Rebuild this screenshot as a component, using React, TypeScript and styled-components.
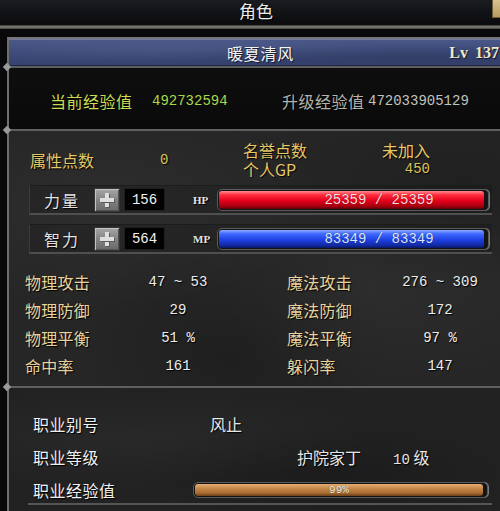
import { Fragment } from 'react'
import { createGlobalStyle, styled } from 'styled-components'

const GlobalStyle = createGlobalStyle`
  html, body {
    margin: 0;
    padding: 0;
    background: #09090b;
    overflow: hidden;
  }
  body {
    font-family: 'Noto Sans CJK SC', 'Noto Sans', sans-serif;
  }
  #root {
    width: 500px;
    height: 511px;
    overflow: hidden;
  }
`

const mono = `'Liberation Mono', 'DejaVu Sans Mono', monospace`

type BarKind = 'hp' | 'mp' | 'job'

const stats = [
	['物理攻击', '47 ~ 53', '魔法攻击', '276 ~ 309'],
	['物理防御', '29', '魔法防御', '172'],
	['物理平衡', '51 %', '魔法平衡', '97 %'],
	['命中率', '161', '躲闪率', '147'],
]

export default function App() {
	return (
		<>
			<GlobalStyle />
			<Window>
				<TitleBar>
					<Title>角色</Title>
					<CloseTab />
				</TitleBar>
				<Rail />
				<Frame>
					<NameBar>
						<Name>暖夏清风</Name>
						<Level>Lv 137</Level>
					</NameBar>

					<ExpSection>
						<ExpLabel $tone='current'>当前经验值</ExpLabel>
						<ExpValue $tone='current'>492732594</ExpValue>
						<ExpLabel $tone='next'>升级经验值</ExpLabel>
						<ExpValue $tone='next'>472033905129</ExpValue>
					</ExpSection>

					<AttrSection>
						<PointsRow>
							<GoldLabel>属性点数</GoldLabel>
							<GoldValue>0</GoldValue>
							<HonorBlock>
								<GoldLabel>名誉点数</GoldLabel>
								<GoldLabel>未加入</GoldLabel>
								<GoldLabel>个人GP</GoldLabel>
								<GoldValue>450</GoldValue>
							</HonorBlock>
						</PointsRow>

						<Strip $top={6}>
							<StripLabel>力量</StripLabel>
							<PlusButton />
							<ValueBox>156</ValueBox>
							<Tag>HP</Tag>
							<BarFrame>
								<Bar $kind='hp'>25359 / 25359</Bar>
							</BarFrame>
						</Strip>
						<Strip $top={9}>
							<StripLabel>智力</StripLabel>
							<PlusButton />
							<ValueBox>564</ValueBox>
							<Tag>MP</Tag>
							<BarFrame>
								<Bar $kind='mp'>83349 / 83349</Bar>
							</BarFrame>
						</Strip>

						<StatGrid>
							{stats.map((row) => (
								<Fragment key={row[0]}>
									<StatLabel>{row[0]}</StatLabel>
									<StatValue>{row[1]}</StatValue>
									<span />
									<StatLabel>{row[2]}</StatLabel>
									<StatValue>{row[3]}</StatValue>
								</Fragment>
							))}
						</StatGrid>
					</AttrSection>

					<JobSection>
						<JobGrid>
							<JobLabel>职业别号</JobLabel>
							<JobText>风止</JobText>
							<span />
							<span />
							<JobLabel>职业等级</JobLabel>
							<span />
							<JobText>护院家丁</JobText>
							<JobText>
								<Num>10</Num> 级
							</JobText>
						</JobGrid>
						<JobStrip>
							<JobLabel>职业经验值</JobLabel>
							<BarFrame $slim>
								<Bar $kind='job'>99%</Bar>
							</BarFrame>
						</JobStrip>
					</JobSection>
				</Frame>
			</Window>
		</>
	)
}

const Window = styled.div`
	width: 500px;
	height: 511px;
	display: flex;
	flex-direction: column;
	background: #09090b;
`

const TitleBar = styled.div`
	height: 25px;
	display: grid;
	grid-template-columns: 1fr auto 1fr;
	align-items: start;
	padding-left: 12px;
	background: linear-gradient(180deg, #1b1c21 0%, #101114 60%, #0b0b0d 100%);
`
const Title = styled.div`
	grid-column: 2;
	padding-top: 2px;
	font-size: 17px;
	line-height: 18px;
	color: #ececec;
	text-shadow: 1px 1px 1px #000;
`
const CloseTab = styled.div`
	grid-column: 3;
	justify-self: end;
	width: 7px;
	height: 17px;
	background: linear-gradient(180deg, #d8c28c, #b89c60);
	border-left: 1px solid #6e5c38;
	border-bottom: 1px solid #6e5c38;
`
const Rail = styled.div`
	height: 4px;
	margin-bottom: 8px;
	background: linear-gradient(180deg, #333 0%, #858578 50%, #3a3a3a 100%);
`

const Frame = styled.div`
	margin-left: 7px;
	width: 503px;
	flex: 1;
	display: flex;
	flex-direction: column;
	border-left: 2px solid #6e6e6e;
	border-top: 2px solid #767676;
`

const NameBar = styled.div`
	height: 27px;
	display: grid;
	grid-template-columns: 1fr auto 1fr;
	align-items: center;
	background:
		radial-gradient(ellipse at 30% 40%, rgba(255, 255, 255, 0.05), transparent 50%),
		radial-gradient(ellipse at 80% 70%, rgba(0, 0, 0, 0.12), transparent 50%),
		linear-gradient(180deg, #4b598a 0%, #3d4a7a 45%, #36436f 100%);
	box-shadow: inset 0 1px 0 #6f7aa0, inset 0 -1px 0 #1f2540;
`
const Name = styled.div`
	grid-column: 2;
	font-size: 16px;
	letter-spacing: 0.75px;
	line-height: 1;
	color: #f4f4f4;
	text-shadow: 1px 1px 1px #101426;
`
const Level = styled.div`
	grid-column: 3;
	justify-self: end;
	padding-right: 13px;
	font-family: 'Liberation Serif', serif;
	font-weight: bold;
	font-size: 16px;
	word-spacing: 3px;
	color: #f1e8c6;
	text-shadow: 1px 1px 1px #12162a;
`

const Section = styled.div`
	position: relative;
	border-top: 2px solid #5f5f5f;
	&::before {
		content: '';
		position: absolute;
		left: -5px;
		top: -4px;
		width: 6px;
		height: 6px;
		background: #9a9a9a;
		transform: rotate(45deg);
	}
`

const ExpSection = styled(Section)`
	height: 63px;
	box-sizing: border-box;
	padding: 5px 0 0 41px;
	display: grid;
	grid-template-columns: 102px 130px 86px auto;
	align-items: center;
	background: linear-gradient(180deg, #0e0e0e, #0a0a0a);
`
const ExpLabel = styled.div<{ $tone: 'current' | 'next' }>`
	font-size: 16px;
	letter-spacing: 0.5px;
	color: ${(p) => (p.$tone === 'current' ? '#c9dc52' : '#b3b3ab')};
	text-shadow: 1px 1px 1px #000;
`
const ExpValue = styled.div<{ $tone: 'current' | 'next' }>`
	font-family: ${mono};
	font-size: 14px;
	color: ${(p) => (p.$tone === 'current' ? '#a9d84a' : '#c2c2bc')};
`

const AttrSection = styled(Section)`
	padding-top: 10px;
	box-sizing: border-box;
	height: 257px;
	display: flex;
	flex-direction: column;
	background:
		radial-gradient(ellipse at 18% 30%, rgba(255, 255, 255, 0.035), transparent 40%),
		radial-gradient(ellipse at 72% 62%, rgba(255, 255, 255, 0.03), transparent 45%),
		radial-gradient(ellipse at 45% 85%, rgba(0, 0, 0, 0.2), transparent 40%),
		radial-gradient(ellipse at 90% 20%, rgba(0, 0, 0, 0.15), transparent 35%),
		#262626;
`

const PointsRow = styled.div`
	height: 38px;
	padding-left: 21px;
	display: grid;
	grid-template-columns: 130px 83px 187px;
	align-items: center;
`
const HonorBlock = styled.div`
	display: grid;
	grid-template-columns: 1fr auto;
	grid-auto-rows: 19px;
	align-items: center;
	& > * {
		line-height: 17px;
	}
	& > :nth-child(even) {
		justify-self: end;
	}
`
const GoldLabel = styled.div`
	font-size: 16px;
	line-height: 19px;
	color: #e7c867;
	text-shadow: 1px 1px 1px #000;
`
const GoldValue = styled.div`
	font-family: ${mono};
	font-size: 14px;
	color: #dcc35c;
	text-shadow: 1px 1px 1px #000;
`

const Strip = styled.div<{ $top: number }>`
	margin: ${(p) => p.$top}px 0 0 20px;
	width: 463px;
	height: 30px;
	box-sizing: border-box;
	padding-left: 14px;
	display: flex;
	align-items: center;
	background: rgba(0, 0, 0, 0.12);
	border-top: 1px solid #1c1c1c;
	border-left: 1px solid #3c3c3c;
	border-bottom: 2px solid #4f4f4f;
`
const StripLabel = styled.div`
	width: 50px;
	font-size: 16px;
	letter-spacing: 2px;
	color: #e2e2e2;
	text-shadow: 1px 1px 1px #000;
`
const PlusButton = styled.div`
	position: relative;
	width: 26px;
	height: 24px;
	box-sizing: border-box;
	margin-right: 4px;
	background: linear-gradient(180deg, #a6a6a6 0%, #808080 55%, #6a6a6a 100%);
	border: 1px solid #353535;
	box-shadow: inset 1px 1px 0 #c4c4c4, inset -1px -1px 0 #525252;
	&::before,
	&::after {
		content: '';
		position: absolute;
		background: #dedede;
		box-shadow: 1px 1px 0 #5a5a5a;
	}
	&::before {
		left: 10px;
		top: 4px;
		width: 4px;
		height: 14px;
	}
	&::after {
		left: 5px;
		top: 9px;
		width: 14px;
		height: 4px;
	}
`
const ValueBox = styled.div`
	width: 41px;
	height: 23px;
	box-sizing: border-box;
	margin-right: 28px;
	display: flex;
	align-items: center;
	justify-content: center;
	background: #020202;
	border: 1px solid #1e1e1e;
	font-family: ${mono};
	font-size: 14px;
	color: #f2f2f2;
`
const Tag = styled.div`
	width: 24px;
	font-family: 'Liberation Serif', serif;
	font-weight: bold;
	font-size: 11px;
	color: #e4e4e4;
	text-shadow: 1px 1px 0 #000;
`
const BarFrame = styled.div<{ $slim?: boolean }>`
	width: ${(p) => (p.$slim ? 295 : 272)}px;
	height: ${(p) => (p.$slim ? 16 : 22)}px;
	box-sizing: border-box;
	padding: 1px 4px 1px 1px;
	display: flex;
	background: #141414;
	border: 1px solid #5a5a5a;
	border-radius: 5px;
	box-shadow: 1px 0 0 #7a7a7a;
`
const barFill: Record<BarKind, string> = {
	hp: 'linear-gradient(180deg, #ff8c94 0%, #ff2c3c 22%, #e4001c 55%, #a4000f 85%, #5e0008 100%)',
	mp: 'linear-gradient(180deg, #8eaaff 0%, #3e68ff 22%, #1e40e2 55%, #122aa2 85%, #0a1862 100%)',
	job: 'linear-gradient(180deg, #e6ae76 0%, #c88a4a 35%, #a86c32 75%, #6c3e18 100%)',
}
const Bar = styled.div<{ $kind: BarKind }>`
	flex: 1;
	box-sizing: border-box;
	padding-left: ${(p) => (p.$kind === 'job' ? 0 : 55)}px;
	display: flex;
	align-items: center;
	justify-content: center;
	border-radius: 3px;
	background: ${(p) => barFill[p.$kind]};
	font-family: ${mono};
	font-size: ${(p) => (p.$kind === 'job' ? 11 : 14)}px;
	white-space: pre;
	color: ${(p) => (p.$kind === 'hp' ? '#ffdcdc' : p.$kind === 'mp' ? '#dce6ff' : '#f6f0e0')};
	text-shadow: 0 0 1px rgba(0, 0, 0, 0.6);
`

const StatGrid = styled.div`
	margin: 14px 0 0 16px;
	display: grid;
	grid-template-columns: 113px 80px 69px 113px 80px;
	grid-auto-rows: 28px;
	align-items: center;
`
const StatLabel = styled.div`
	font-size: 16px;
	letter-spacing: 0.25px;
	color: #e7d49d;
	text-shadow: 1px 1px 1px #000;
`
const StatValue = styled.div`
	text-align: center;
	font-family: ${mono};
	font-size: 14px;
	white-space: pre;
	color: #ededed;
	text-shadow: 1px 1px 1px #000;
`

const JobSection = styled(Section)`
	flex: 1;
	padding-top: 21px;
	display: flex;
	flex-direction: column;
	background:
		radial-gradient(ellipse at 25% 40%, rgba(255, 255, 255, 0.03), transparent 45%),
		radial-gradient(ellipse at 65% 70%, rgba(0, 0, 0, 0.18), transparent 45%),
		#222222;
`
const JobGrid = styled.div`
	padding-left: 24px;
	display: grid;
	grid-template-columns: 177px 87px 96px auto;
	grid-auto-rows: 30px;
	row-gap: 3px;
	align-items: center;
`
const JobLabel = styled.div`
	font-size: 16px;
	letter-spacing: 0.5px;
	color: #f0f0f0;
	text-shadow: 1px 1px 1px #000;
`
const JobText = styled.div`
	font-size: 16px;
	color: #e6e6e6;
	text-shadow: 1px 1px 1px #000;
`
const Num = styled.span`
	font-family: ${mono};
	font-size: 14px;
`
const JobStrip = styled.div`
	margin: 4px 0 0 19px;
	width: 464px;
	height: 29px;
	box-sizing: border-box;
	padding-left: 5px;
	display: flex;
	align-items: center;
	border-bottom: 2px solid #555;
	& > ${JobLabel} {
		width: 160px;
	}
`
